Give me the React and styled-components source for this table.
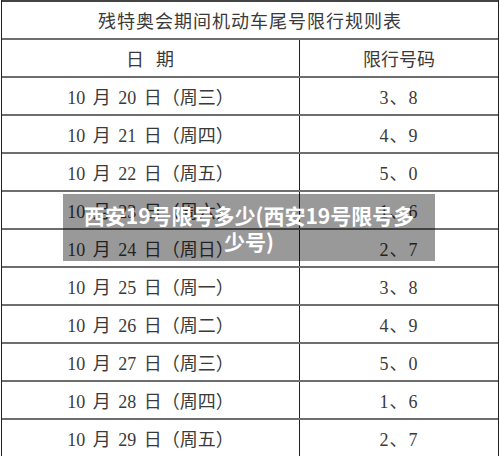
import React from 'react';
import styled, { createGlobalStyle } from 'styled-components';

const GlobalStyle = createGlobalStyle`
  html, body {
    margin: 0;
    padding: 0;
    background: #ffffff;
  }
  body {
    width: 500px;
    height: 456px;
    overflow: hidden;
  }
`;

const Page = styled.div`
  position: relative;
  width: 500px;
  height: 456px;
  padding-left: 1px;
  box-sizing: border-box;
`;

const Sheet = styled.div`
  display: flex;
  flex-direction: column;
  width: 498px;
  border-left: 1px solid #222;
  border-right: 1px solid #222;
  box-sizing: border-box;
  font-family: "Liberation Serif", "Noto Sans CJK SC", serif;
  font-size: 18px;
  color: #3a3a3a;
`;

const Row = styled.div`
  display: flex;
  height: 38px;
  box-sizing: border-box;
  border-top: 2px solid ${(p) => (p.$first ? '#444' : '#6e6e6e')};
`;

const Cell = styled.div`
  display: flex;
  align-items: center;
  justify-content: center;
  white-space: pre;
  letter-spacing: ${(p) => p.$spacing || '0'};
  word-spacing: ${(p) => p.$words || '0'};
  ${(p) => (p.$left ? 'width: 297px; border-right: 1px solid #222;' : 'flex: 1;')}
  ${(p) => (p.$wide ? 'flex: 1;' : '')}
`;

const Overlay = styled.div`
  position: absolute;
  left: 63px;
  top: 194px;
  width: 372px;
  height: 67px;
  padding: 0 16px;
  box-sizing: border-box;
  background: rgba(0, 0, 0, 0.4);
  display: flex;
  align-items: center;
  justify-content: center;
  text-align: center;
  color: #ffffff;
  font-family: "Noto Sans CJK SC", "Noto Sans", sans-serif;
  font-weight: 700;
  font-size: 21px;
  line-height: 26px;
`;

const rows = [
  ['10 月 20 日（周三）', '3、8'],
  ['10 月 21 日（周四）', '4、9'],
  ['10 月 22 日（周五）', '5、0'],
  ['10 月 23 日（周六）', '1、6'],
  ['10 月 24 日（周日）', '2、7'],
  ['10 月 25 日（周一）', '3、8'],
  ['10 月 26 日（周二）', '4、9'],
  ['10 月 27 日（周三）', '5、0'],
  ['10 月 28 日（周四）', '1、6'],
  ['10 月 29 日（周五）', '2、7'],
];

export default function App() {
  return (
    <Page>
      <GlobalStyle />
      <Sheet>
        <Row $first>
          <Cell $wide $spacing="1px">残特奥会期间机动车尾号限行规则表</Cell>
        </Row>
        <Row>
          <Cell $left $spacing="1px">日  期</Cell>
          <Cell>限行号码</Cell>
        </Row>
        {rows.map(([date, nums]) => (
          <Row key={date}>
            <Cell $left $words="3px">{date}</Cell>
            <Cell $spacing="1px">{nums}</Cell>
          </Row>
        ))}
      </Sheet>
      <Overlay>西安19号限号多少(西安19号限号多少号)</Overlay>
    </Page>
  );
}
